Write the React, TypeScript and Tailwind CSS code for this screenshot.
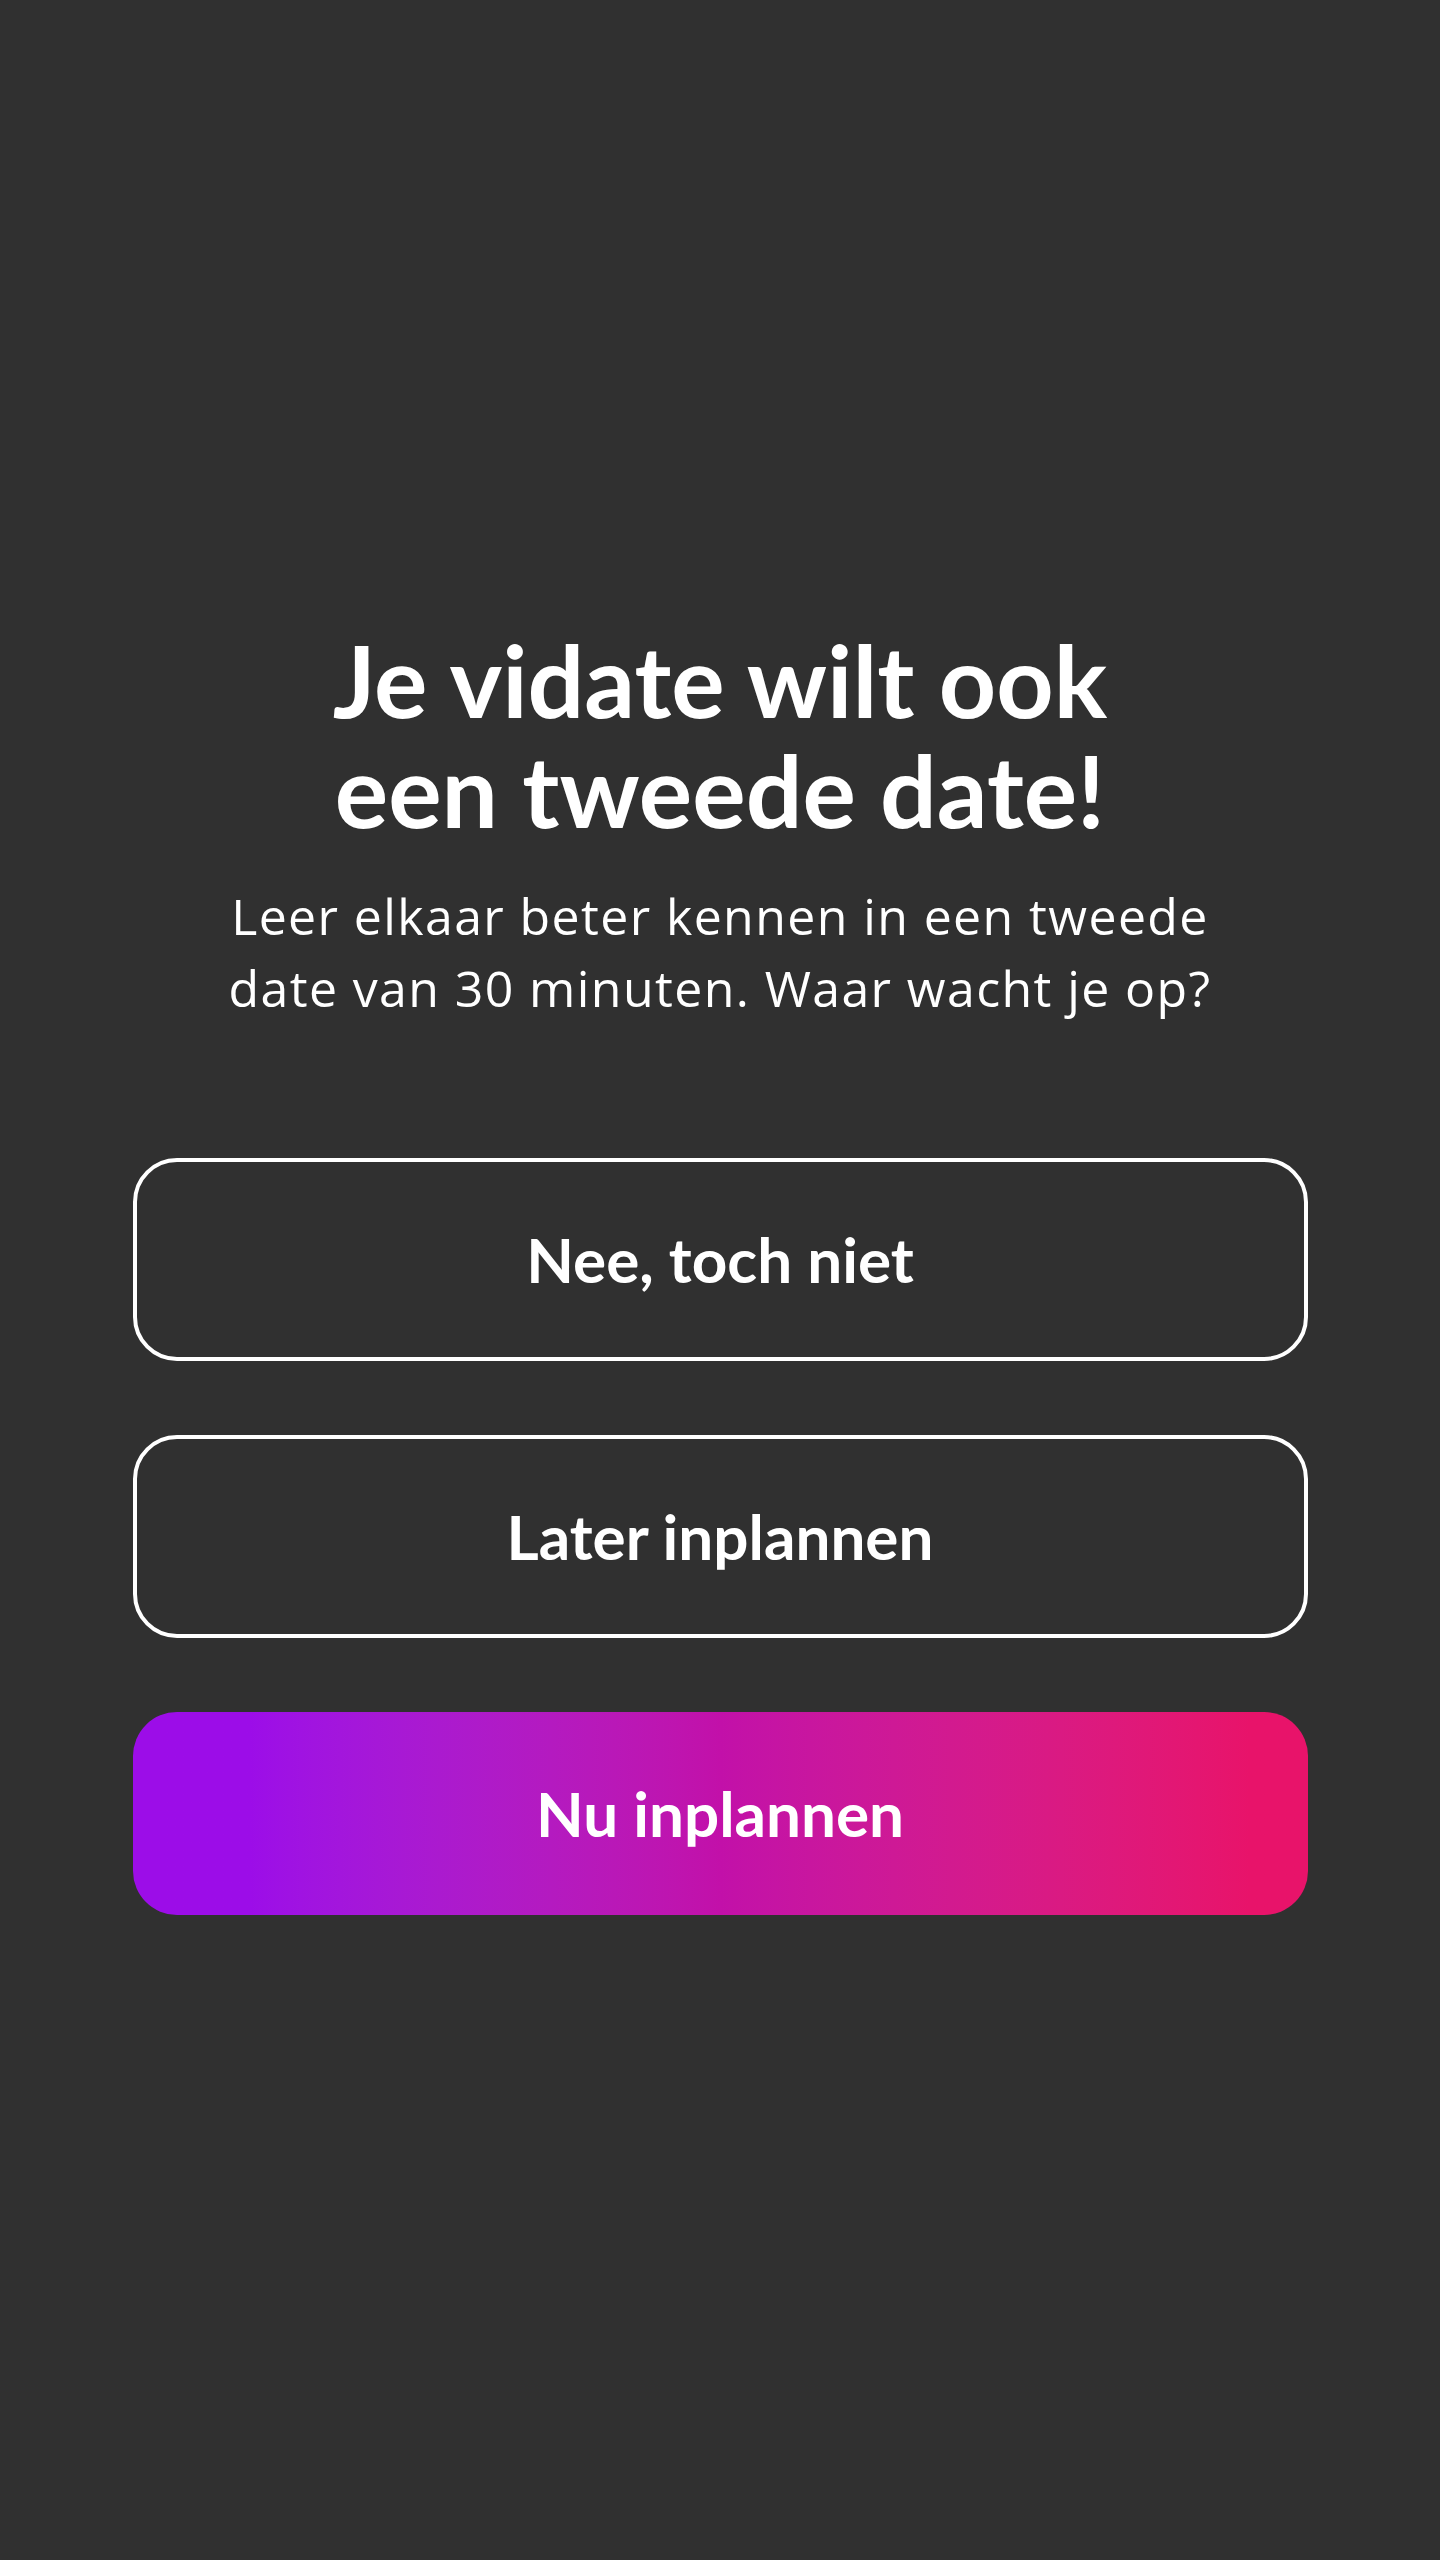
export default function App() {
  return (
    <div className="min-h-[2560px] w-full bg-[#303030] flex flex-col items-center pt-[624px] font-['Lato',sans-serif] text-white">
      <h1 className="text-[100px] leading-[110px] font-bold text-center">
        Je vidate wilt ook
        <br />
        een tweede date!
      </h1>
      <p className="mt-[36px] text-[50px] leading-[72px] tracking-[1.4px] text-center font-['Open_Sans',sans-serif]">
        Leer elkaar beter kennen in een tweede
        <br />
        date van 30 minuten. Waar wacht je op?
      </p>

      <div className="mt-[134px] flex flex-col gap-[74px]">
        <button className="w-[1175px] h-[203px] rounded-[44px] border-4 border-white text-[62px] font-bold">
          Nee, toch niet
        </button>
        <button className="w-[1175px] h-[203px] rounded-[44px] border-4 border-white text-[62px] font-bold">
          Later inplannen
        </button>
        <button className="w-[1175px] h-[203px] rounded-[44px] bg-gradient-to-r from-[#9c0de8] from-10% via-[#c210a9] to-[#e8136a] to-95% text-[62px] font-bold">
          Nu inplannen
        </button>
      </div>
    </div>
  );
}
